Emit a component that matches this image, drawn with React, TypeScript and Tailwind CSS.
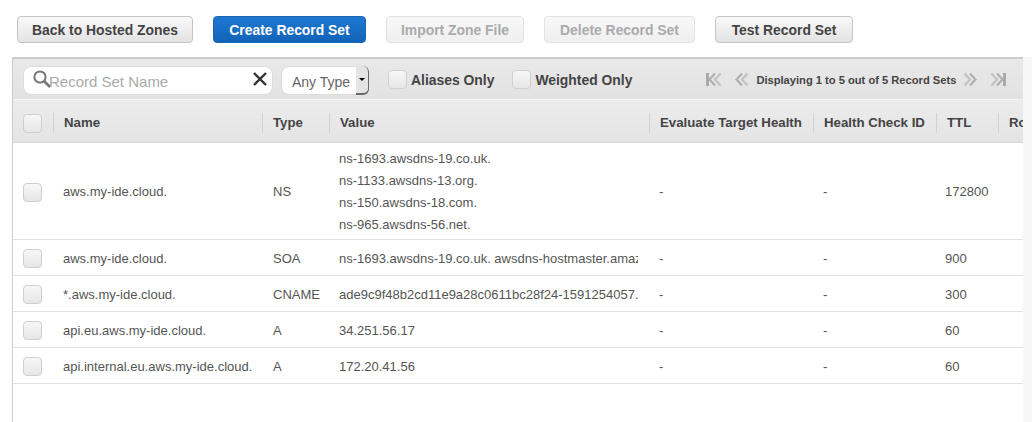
const font = "font-['Liberation_Sans',Arial,sans-serif]"

const columns = 'grid grid-cols-[40px_209px_67px_320px_164px_123px_62px_48px]'

const records = [
  {
    name: 'aws.my-ide.cloud.',
    type: 'NS',
    value: ['ns-1693.awsdns-19.co.uk.', 'ns-1133.awsdns-13.org.', 'ns-150.awsdns-18.com.', 'ns-965.awsdns-56.net.'],
    ttl: '172800',
  },
  { name: 'aws.my-ide.cloud.', type: 'SOA', value: ['ns-1693.awsdns-19.co.uk. awsdns-hostmaster.amazon.com. 1 7200 900'], ttl: '900' },
  { name: '*.aws.my-ide.cloud.', type: 'CNAME', value: ['ade9c9f48b2cd11e9a28c0611bc28f24-1591254057.eu-west-1.elb'], ttl: '300' },
  { name: 'api.eu.aws.my-ide.cloud.', type: 'A', value: ['34.251.56.17'], ttl: '60' },
  { name: 'api.internal.eu.aws.my-ide.cloud.', type: 'A', value: ['172.20.41.56'], ttl: '60' },
]

function Checkbox() {
  return (
    <span className="block h-[19px] w-[19px] rounded-[4px] border border-[#cfcfcf] bg-gradient-to-b from-[#f7f7f7] to-[#e6e6e6]" />
  )
}

function HeaderCell({ label }: { label: string }) {
  return (
    <div className="flex h-[20px] items-center whitespace-nowrap border-l border-[#d2d2d2] pl-[10px]">
      {label}
    </div>
  )
}

function Chevrons({ dir, bar }: { dir: 'left' | 'right'; bar?: boolean }) {
  return (
    <svg width="17" height="15" viewBox="0 0 17 15" className={dir === 'right' ? 'scale-x-[-1]' : ''}>
      {bar && <rect x="0" y="1" width="3" height="13" fill="#a9a9a9" />}
      <path d="M9 1.5 L3.5 7.5 L9 13.5" fill="none" stroke="#b0b0b0" strokeWidth="2.2" />
      <path d="M14.5 1.5 L9 7.5 L14.5 13.5" fill="none" stroke="#c2c2c2" strokeWidth="2.2" />
    </svg>
  )
}

function Btn({ label, w, kind }: { label: string; w: string; kind?: 'primary' | 'disabled' }) {
  const look =
    kind === 'primary'
      ? 'border-[#1a66b3] bg-gradient-to-b from-[#1f78d1] to-[#1063b8] text-white'
      : kind === 'disabled'
        ? 'border-[#e3e3e3] bg-gradient-to-b from-[#f8f8f8] to-[#efefef] text-[#aaaaaa]'
        : 'border-[#c4c4c4] bg-gradient-to-b from-[#f9f9f9] to-[#e3e3e3] text-[#444444]'
  return (
    <button className={`flex h-[27px] items-center justify-center rounded-[4px] border pt-[2px] text-[13.9px] font-bold ${w} ${look}`}>
      {label}
    </button>
  )
}

export default function App() {
  return (
    <div className={`h-[422px] w-[1032px] overflow-hidden bg-white ${font}`}>
      {/* Action buttons */}
      <div className="flex gap-[20px] pl-[17px] pt-[16px]">
        <Btn label="Back to Hosted Zones" w="w-[176px]" />
        <Btn label="Create Record Set" w="w-[153px]" kind="primary" />
        <Btn label="Import Zone File" w="w-[138px]" kind="disabled" />
        <Btn label="Delete Record Set" w="w-[151px]" kind="disabled" />
        <Btn label="Test Record Set" w="w-[138px]" />
      </div>

      <div className="mt-[14px] flex">
        <div className="ml-[12px] h-[365px] w-[1011px] overflow-hidden border-l border-t-2 border-[#cccccc] bg-white">
          {/* Filter bar */}
          <div className="flex h-[41px] items-center border-b border-[#f5f5f5] bg-gradient-to-b from-[#e9e9e9] to-[#e2e2e2] pl-[10px] pt-[3px]">
            <div className="relative flex h-[29px] w-[250px] items-center rounded-[8px] border border-[#dcdcdc] bg-white pl-[25px] pt-[4px] text-[15px] text-[#aaaaaa]">
              <svg width="20" height="20" viewBox="0 0 20 20" className="absolute left-[8px] top-[2px]">
                <circle cx="8" cy="8" r="5.6" fill="none" stroke="#777777" strokeWidth="2" />
                <path d="M12 12 L18 18" stroke="#777777" strokeWidth="2.6" />
              </svg>
              Record Set Name
              <svg width="16" height="16" viewBox="0 0 16 16" className="absolute right-[4px] top-[4px]">
                <path d="M2 2 L14 14 M14 2 L2 14" stroke="#333333" strokeWidth="2.4" />
              </svg>
            </div>
            <div className="relative ml-[8px] flex h-[29px] w-[88px] items-center rounded-[8px] border border-[#dcdcdc] bg-white pl-[10px] pt-[4px] text-[14px] text-[#666666]">
              Any Type
              <div className="absolute right-[-1px] top-[-1px] flex h-[29px] w-[13px] items-center justify-center rounded-r-[6px] border-b-2 border-r border-[#6a6a6a] bg-[#e4e4e4]">
                <span className="h-0 w-0 border-x-[3px] border-t-[3px] border-x-transparent border-t-black" />
              </div>
            </div>
            <div className="ml-[19px] mt-[-2px]"><Checkbox /></div>
            <span className="ml-[4px] mt-[-1px] whitespace-nowrap text-[13.9px] font-bold text-[#444444]">Aliases Only</span>
            <div className="ml-[18px] mt-[-2px]"><Checkbox /></div>
            <span className="ml-[4px] mt-[-1px] whitespace-nowrap text-[13.9px] font-bold text-[#444444]">Weighted Only</span>
            <div className="ml-[74px] mt-[-2px] flex items-center">
              <Chevrons dir="left" bar />
              <div className="ml-[10px]"><Chevrons dir="left" /></div>
              <span className="ml-[6px] mt-[2px] whitespace-nowrap text-[11.15px] font-bold text-[#444444]">Displaying 1 to 5 out of 5 Record Sets</span>
              <div className="ml-[6px]"><Chevrons dir="right" /></div>
              <div className="ml-[10px]"><Chevrons dir="right" bar /></div>
            </div>
          </div>

          {/* Table header */}
          <div className={`${columns} h-[43px] items-center border-b border-[#d8d8d8] bg-gradient-to-b from-[#ececec] to-[#e4e4e4] pt-[4px] text-[13.25px] font-bold text-[#444444]`}>
            <div className="pl-[10px]"><Checkbox /></div>
            <HeaderCell label="Name" />
            <HeaderCell label="Type" />
            <HeaderCell label="Value" />
            <HeaderCell label="Evaluate Target Health" />
            <HeaderCell label="Health Check ID" />
            <HeaderCell label="TTL" />
            <HeaderCell label="Routing Policy" />
          </div>

          {/* Rows */}
          {records.map((r, i) => (
            <div key={i} className={`${columns} items-center border-b border-[#e1e1e1] pt-[2px] text-[13px] text-[#555555]`}>
              <div className="pl-[10px]"><Checkbox /></div>
              <div className="whitespace-nowrap pl-[10px]">{r.name}</div>
              <div className="pl-[11px]">{r.type}</div>
              <div className={`min-w-0 pl-[10px] pr-[11px] ${r.value.length > 1 ? 'py-[3px]' : ''}`}>
                {r.value.map((v) => (
                  <div key={v} className={`overflow-hidden whitespace-nowrap ${r.value.length > 1 ? 'leading-[22px]' : 'leading-[33px]'}`}>{v}</div>
                ))}
              </div>
              <div className="pl-[10px]">-</div>
              <div className="pl-[10px]">-</div>
              <div className="pl-[9px]">{r.ttl}</div>
              <div />
            </div>
          ))}
        </div>
        <div className="h-[365px] flex-1 bg-[#f7f7f7]" />
      </div>
    </div>
  )
}
